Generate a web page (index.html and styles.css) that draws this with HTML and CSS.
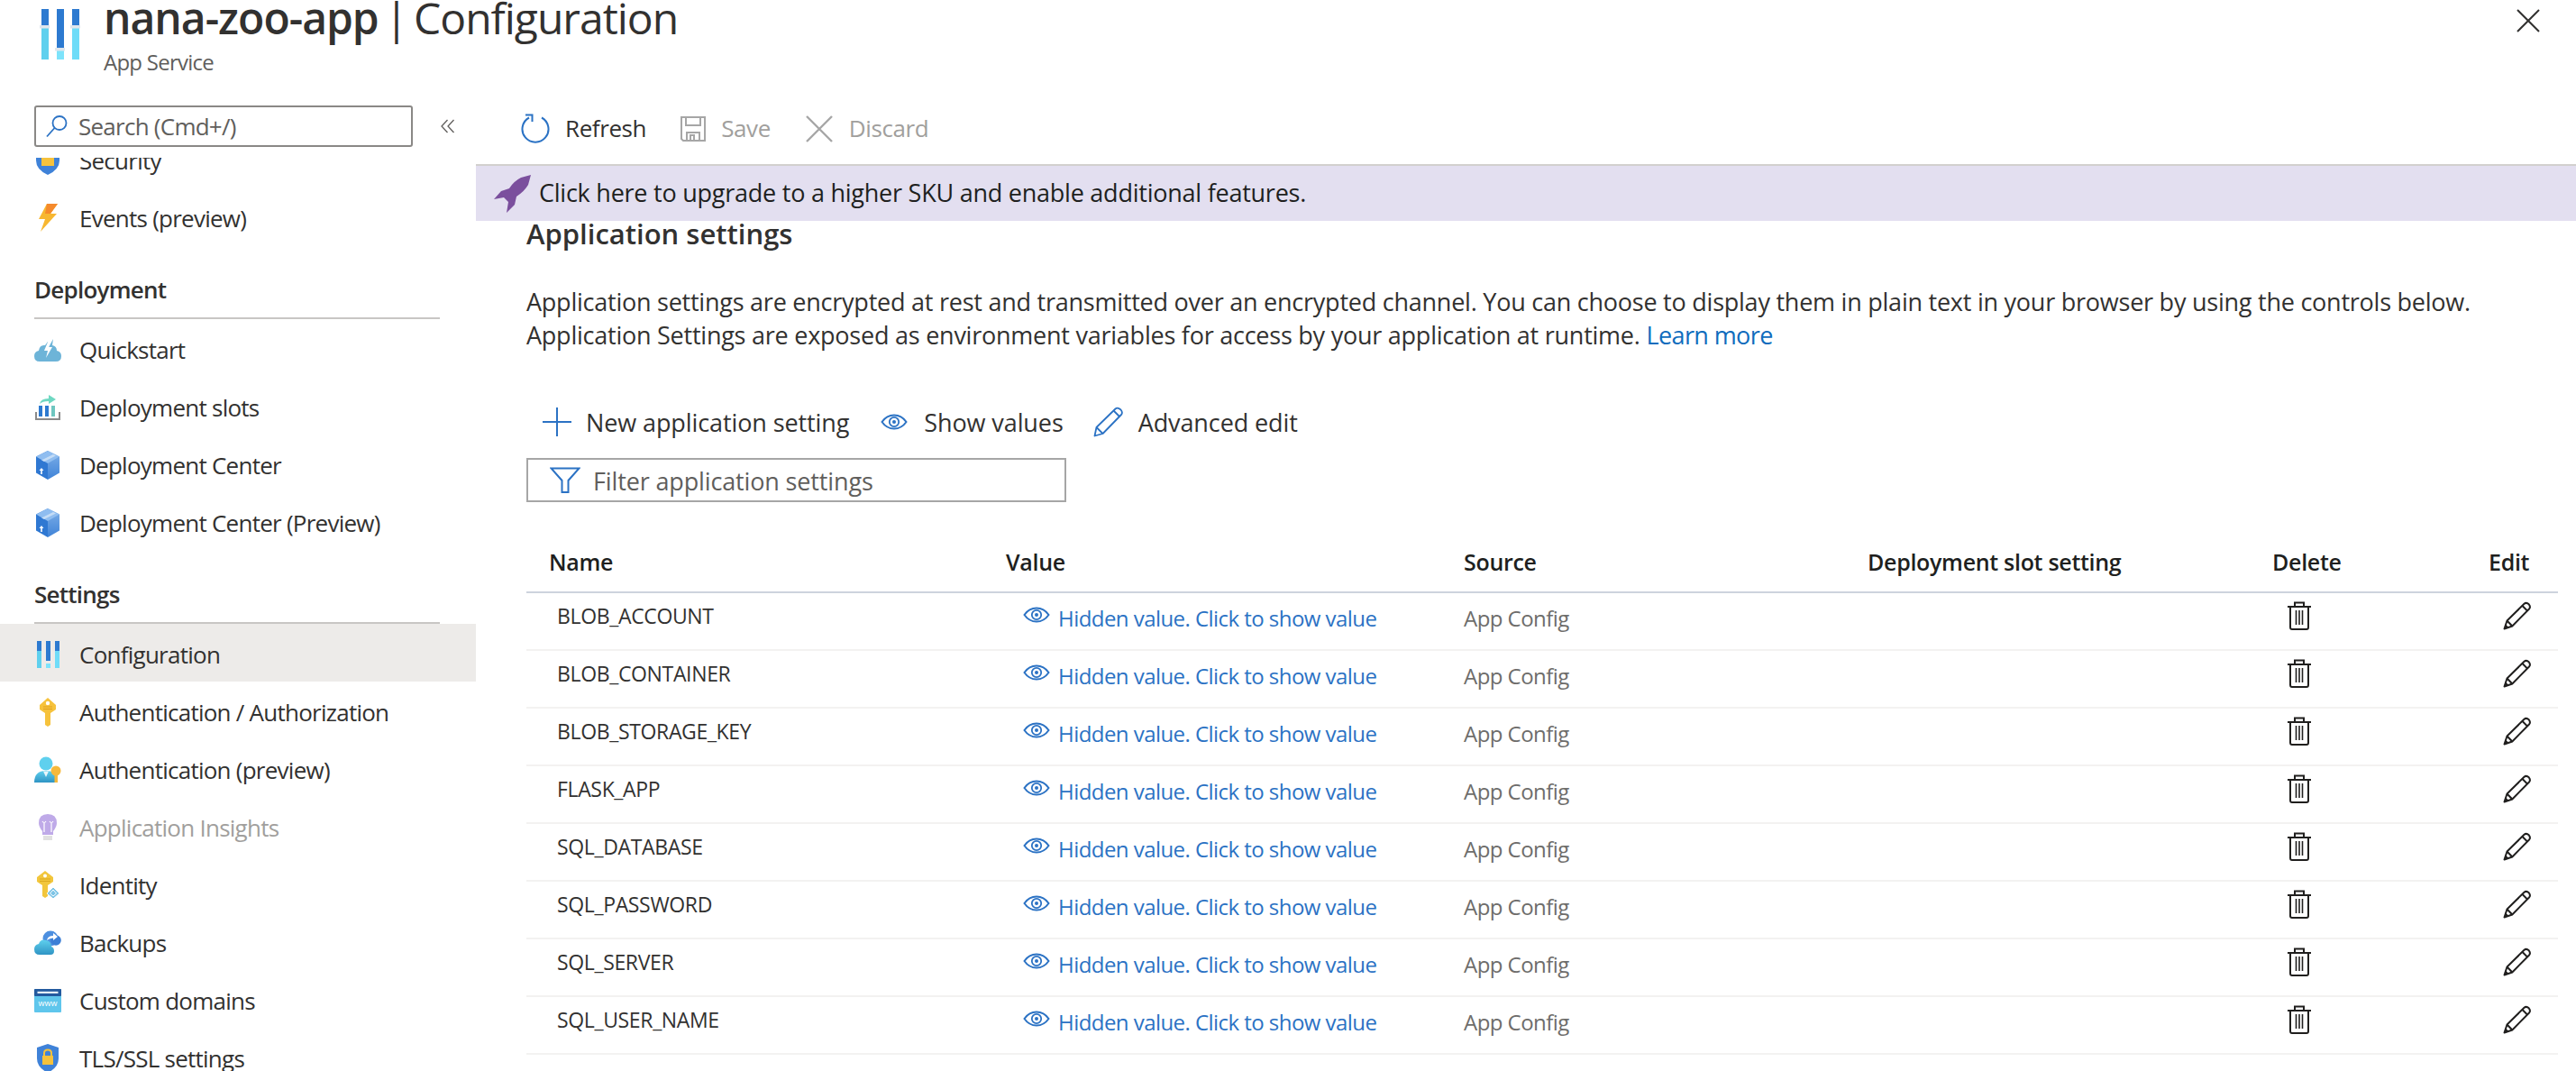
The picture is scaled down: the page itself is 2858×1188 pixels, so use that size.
FILE: index.html
```html
<!DOCTYPE html>
<html>
<head>
  <meta charset="UTF-8">
  <title>nana-zoo-app | Configuration</title>
  <link rel="stylesheet" href="styles.css">
</head>
<body>

<!-- icons that get used more than once -->
<svg class="sprite" xmlns="http://www.w3.org/2000/svg">
  <defs>
    <linearGradient id="boxFill" x1="0" y1="0" x2="0" y2="1">
      <stop offset="0" stop-color="#7fb0e8"/><stop offset="1" stop-color="#3f83d8"/>
    </linearGradient>
    <linearGradient id="skyFill" x1="0" y1="0" x2="0" y2="1">
      <stop offset="0" stop-color="#5fd0ee"/><stop offset="1" stop-color="#2f94c4"/>
    </linearGradient>
  </defs>
  <symbol id="i-eye" viewBox="0 0 30 18">
    <path d="M1.500 9C5 4 9.500 1.500 15 1.500S25 4 28.500 9C25 14 20.500 16.500 15 16.500S5 14 1.500 9Z" fill="none" stroke="currentColor" stroke-width="2"/>
    <circle cx="15" cy="9" r="5.200" fill="none" stroke="currentColor" stroke-width="1.800"/>
    <circle cx="15" cy="9" r="2" fill="currentColor"/>
  </symbol>
  <symbol id="i-trash" viewBox="0 0 26 32">
    <path d="M0 6H26M8 6V1.500H18V6M3 6V29Q3 31 5 31H21Q23 31 23 29V6" fill="none" stroke="currentColor" stroke-width="2"/>
    <path d="M9.500 10V26M13 10V26M16.500 10V26" fill="none" stroke="currentColor" stroke-width="1.600"/>
  </symbol>
  <symbol id="i-pencil" viewBox="0 0 32 32">
    <path d="M1.500 30.500L4.500 21.500L23.500 2.800Q26 .8 28.700 3.300Q31 6 29 8.500L10.300 27.500Z" fill="none" stroke="currentColor" stroke-width="2" stroke-linejoin="round"/>
    <path d="M21.500 5L27 10.500M4.500 21.500L10.300 27.500" fill="none" stroke="currentColor" stroke-width="2"/>
    <path d="M1.500 30.500L3 25.500L6.500 29Z" fill="currentColor"/>
  </symbol>
  <symbol id="i-box" viewBox="0 0 30 32">
    <path d="M15 0L28 6.500V24.500L15 32Z" fill="url(#boxFill)"/>
    <path d="M15 0L2 6.500V24.500L15 32V14Z" fill="#2f78d2"/>
    <path d="M2 6.500L15 0L28 6.500L15 14Z" fill="#8fbdf0"/>
    <path d="M8 10.500L21 4L24 5.500L11 12Z" fill="#c4dcf6"/>
    <path d="M8 19L5.500 22H7.200V26H8.800V22H10.500Z" fill="#fff"/>
  </symbol>
</svg>

<header class="blade-head">
  <svg class="blade-logo" viewBox="0 0 46 58" width="46" height="58">
    <rect x="2" y="1" width="8" height="20" fill="#2d7ad0"/>
    <rect x="2" y="21" width="8" height="36" fill="#5fd0ee"/>
    <rect x="19" y="1" width="8" height="45" fill="#2d7ad0"/>
    <rect x="19" y="46" width="8" height="11" fill="#7de3fb"/>
    <rect x="36" y="1" width="8" height="20" fill="#2d7ad0"/>
    <rect x="36" y="21" width="8" height="36" fill="#6fdcf8"/>
    <rect x="0" y="19" width="11" height="3.500" fill="#dfe6ec"/>
    <rect x="17" y="44" width="11" height="3.500" fill="#dfe6ec"/>
    <rect x="34" y="19" width="11" height="3.500" fill="#dfe6ec"/>
  </svg>
  <div class="blade-title">
    <h1><b>nana-zoo-app</b> | Configuration</h1>
    <p>App Service</p>
  </div>
  <svg class="blade-close" viewBox="0 0 26 26" width="26" height="26">
    <path d="M1 1L25 25M25 1L1 25" stroke="#323130" stroke-width="2"/>
  </svg>
</header>

<div class="layout">
  <aside class="sidebar">
    <div class="search-row">
      <div class="search-box">
        <svg viewBox="0 0 24 26" width="24" height="26">
          <circle cx="15" cy="9.500" r="7.500" fill="none" stroke="#2b72c4" stroke-width="1.800"/>
          <path d="M9.500 15L1 24.500" stroke="#2b72c4" stroke-width="1.800"/>
        </svg>
        <span>Search (Cmd+/)</span>
      </div>
      <svg class="collapse" viewBox="0 0 16 16" width="16" height="16">
        <path d="M7.500 1L1 8L7.500 15M14.500 1L8 8L14.500 15" fill="none" stroke="#605e5c" stroke-width="1.300"/>
      </svg>
    </div>

    <nav class="nav-clip">
      <div class="nav">
        <a class="nav-item">
          <svg viewBox="0 0 30 32" width="30" height="32">
            <path d="M2 4L15 0L28 4V16Q28 26 15 32Q2 26 2 16Z" fill="#3f82d8"/>
            <rect x="8" y="12" width="14" height="10" fill="#f6c23c"/>
          </svg>
          Security
        </a>
        <a class="nav-item">
          <svg viewBox="0 0 30 32" width="30" height="32">
            <path d="M14 0H26L18 11H25L7 31L12 17H5Z" fill="#f7b731"/>
            <path d="M14 0H26L18 11H12Z" fill="#f58a2c"/>
          </svg>
          Events (preview)
        </a>

        <h2 class="nav-head">Deployment</h2>
        <a class="nav-item">
          <svg viewBox="0 0 30 30" width="30" height="30">
            <path d="M6 28Q0 28 0 22Q0 17 5 16Q6 9 12 10L15 6L16 12L21 3L20 10Q25 11 25 16Q30 17 30 22Q30 28 24 28Z" fill="#6db4d8"/>
            <path d="M16 4L11 16H15L13 24L20 12H16L19 4Z" fill="#fff"/>
          </svg>
          Quickstart
        </a>
        <a class="nav-item">
          <svg viewBox="0 0 30 30" width="30" height="30">
            <path d="M2 20V28H28V20" fill="none" stroke="#8a8a8a" stroke-width="2"/>
            <rect x="5" y="13" width="4" height="12" fill="#2d7ad0"/>
            <rect x="12" y="13" width="4" height="12" fill="#2d7ad0"/>
            <rect x="19" y="13" width="4" height="12" fill="#6fc6c0"/>
            <path d="M6 11Q7 5 16 5V1L24 6L16 11V8Q9 8 6 11Z" fill="#6fd8c2"/>
          </svg>
          Deployment slots
        </a>
        <a class="nav-item"><svg width="30" height="32"><use href="#i-box"/></svg>Deployment Center</a>
        <a class="nav-item"><svg width="30" height="32"><use href="#i-box"/></svg>Deployment Center (Preview)</a>

        <h2 class="nav-head">Settings</h2>
        <a class="nav-item selected">
          <svg viewBox="0 0 30 30" width="30" height="30">
            <rect x="3" y="0" width="5" height="11" fill="#2d7ad0"/><rect x="3" y="11" width="5" height="19" fill="#5fd0ee"/>
            <rect x="13" y="0" width="5" height="22" fill="#2d7ad0"/><rect x="13" y="25" width="5" height="5" fill="#7de3fb"/>
            <rect x="23" y="0" width="5" height="11" fill="#2d7ad0"/><rect x="23" y="11" width="5" height="19" fill="#6fdcf8"/>
          </svg>
          Configuration
        </a>
        <a class="nav-item">
          <svg viewBox="0 0 30 32" width="30" height="32">
            <path d="M15 0L24 8V13L18 17V30L15 32L12 30V17L6 13V8Z" fill="#f6c23c"/>
            <circle cx="15" cy="6" r="2.200" fill="#fff"/>
            <path d="M10 10H20M10 12.500H20" stroke="#e0a020" stroke-width="1"/>
          </svg>
          Authentication / Authorization
        </a>
        <a class="nav-item">
          <svg viewBox="0 0 30 30" width="30" height="30">
            <circle cx="13" cy="8" r="7.500" fill="#5fd0ee"/>
            <path d="M0 29Q0 16 13 16Q26 16 26 29Z" fill="url(#skyFill)"/>
            <path d="M10 16.500H16L13 23Z" fill="#e8f6fb"/>
            <circle cx="24" cy="16" r="5.500" fill="#f6b93c"/>
            <rect x="22.500" y="18" width="3.500" height="11" fill="#f6b93c"/>
          </svg>
          Authentication (preview)
        </a>
        <a class="nav-item muted">
          <svg viewBox="0 0 30 30" width="30" height="30">
            <path d="M15 0Q25 0 25 10Q25 14 21 19V23H9V19Q5 14 5 10Q5 0 15 0Z" fill="#bfaae8"/>
            <path d="M11 9V20M19 9V20M9 8Q11 11 13 8M17 8Q19 11 21 8" fill="none" stroke="#fff" stroke-width="1.200"/>
            <rect x="10" y="24" width="10" height="5" fill="#e1e1e1"/>
          </svg>
          Application Insights
        </a>
        <a class="nav-item">
          <svg viewBox="0 0 30 32" width="30" height="32">
            <path d="M12 0L21 7V12L15 16V28L12 30L9 28V16L3 12V7Z" fill="#f2c63c"/>
            <circle cx="12" cy="5.500" r="2" fill="#fff"/>
            <path d="M6 9H18M6 11.500H18" stroke="#dca91f" stroke-width="1"/>
            <path d="M21 18L28 25L21 31L14 25Z" fill="#7cc4e6" stroke="#fff" stroke-width="1"/>
            <path d="M21 21L24.500 25L21 28L17.500 25Z" fill="none" stroke="#fff" stroke-width="1"/>
          </svg>
          Identity
        </a>
        <a class="nav-item">
          <svg viewBox="0 0 30 28" width="30" height="28">
            <circle cx="18" cy="9" r="8.500" fill="#4d8fdf"/>
            <circle cx="24" cy="11" r="5.800" fill="#3c7fd6"/>
            <path d="M6 27Q0 27 0 21Q0 16 5 15Q7 9 13 11Q19 12 19 18Q22 19 22 23Q22 27 18 27Z" fill="url(#skyFill)"/>
            <path d="M14 11Q15 6 21 6V3L26 7L21 11V8.500Q17 8.500 14 11Z" fill="#fff"/>
          </svg>
          Backups
        </a>
        <a class="nav-item">
          <svg viewBox="0 0 30 26" width="30" height="26">
            <rect x="0" y="0" width="30" height="26" rx="1" fill="#5fc6ec"/>
            <rect x="0" y="0" width="30" height="8" rx="1" fill="#235a9e"/>
            <rect x="3.500" y="2.800" width="23" height="2.200" fill="#e4eef8"/>
            <text x="15" y="18.500" class="www">www</text>
          </svg>
          Custom domains
        </a>
        <a class="nav-item">
          <svg viewBox="0 0 30 32" width="30" height="32">
            <path d="M3 4L15 0L27 4V16Q27 26 15 32Q3 26 3 16Z" fill="#3f82d8"/>
            <rect x="9" y="13" width="12" height="10" fill="#f6c23c"/>
            <path d="M11 13V10Q11 6.500 15 6.500Q19 6.500 19 10V13" fill="none" stroke="#f6c23c" stroke-width="2"/>
          </svg>
          TLS/SSL settings
        </a>
      </div>
    </nav>
  </aside>

  <main class="content">
    <div class="toolbar">
      <a class="tool">
        <svg viewBox="0 0 32 34" width="32" height="34">
          <path d="M9 4.500A14.500 14.500 0 1 0 23 4.500" fill="none" stroke="#2b72c4" stroke-width="2"/>
          <path d="M5 1.500H12.500V9" fill="none" stroke="#2b72c4" stroke-width="2"/>
        </svg>
        <span>Refresh</span>
      </a>
      <a class="tool disabled">
        <svg viewBox="0 0 28 28" width="28" height="28">
          <path d="M1 1H27V27H3L1 25Z" fill="none" stroke="#a6a6a6" stroke-width="2"/>
          <path d="M6 1V10H22V1M7 27V18H21V27M11 27V21H15V27" fill="none" stroke="#a6a6a6" stroke-width="2"/>
        </svg>
        <span>Save</span>
      </a>
      <a class="tool disabled">
        <svg viewBox="0 0 32 32" width="32" height="32">
          <path d="M2 2L30 30M30 2L2 30" stroke="#a6a6a6" stroke-width="2.400"/>
        </svg>
        <span>Discard</span>
      </a>
    </div>

    <div class="banner">
      <svg viewBox="0 0 42 42" width="42" height="42">
        <path d="M41 0L30 3Q22 7 17 15L8 18L0 27L11 25L16 30L14 42L23 33L25 24Q34 18 38 11Z" fill="#7b4f9d"/>
      </svg>
      <span>Click here to upgrade to a higher SKU and enable additional features.</span>
    </div>

    <section class="settings">
      <h3>Application settings</h3>
      <p class="intro">Application settings are encrypted at rest and transmitted over an encrypted channel. You can choose to display them in plain text in your browser by using the controls below.<br>Application Settings are exposed as environment variables for access by your application at runtime. <a class="link">Learn more</a></p>

      <div class="commands">
        <a class="command">
          <svg viewBox="0 0 32 32" width="32" height="32"><path d="M16 0V32M0 16H32" stroke="#2b72c4" stroke-width="2"/></svg>
          New application setting
        </a>
        <a class="command eye">
          <svg width="30" height="18"><use href="#i-eye"/></svg>
          Show values
        </a>
        <a class="command pen">
          <svg viewBox="0 0 34 34" width="34" height="34">
            <path d="M1.500 32.500L3.500 23L24.500 2.500Q27 .5 30.500 3.500Q33 6.500 31 9L10.500 30Z" fill="none" stroke="#2b72c4" stroke-width="1.800" stroke-linejoin="round"/>
            <path d="M22.500 4.500L29 11M3.500 23L10.500 30" fill="none" stroke="#2b72c4" stroke-width="1.800"/>
          </svg>
          Advanced edit
        </a>
      </div>

      <div class="filter">
        <svg viewBox="0 0 34 30" width="34" height="30">
          <path d="M1.500 1.500H32.500L20.500 15V28H13.500V15Z" fill="none" stroke="#2b72c4" stroke-width="2"/>
        </svg>
        <span>Filter application settings</span>
      </div>

      <div class="table">
        <div class="row head">
          <div class="cell">Name</div>
          <div class="cell">Value</div>
          <div class="cell">Source</div>
          <div class="cell">Deployment slot setting</div>
          <div class="cell">Delete</div>
          <div class="cell">Edit</div>
        </div>

        <div class="row">
          <div class="cell name">BLOB_ACCOUNT</div>
          <div class="cell value"><svg width="30" height="18"><use href="#i-eye"/></svg><a>Hidden value. Click to show value</a></div>
          <div class="cell source">App Config</div>
          <div class="cell"></div>
          <div class="cell del"><svg width="26" height="32"><use href="#i-trash"/></svg></div>
          <div class="cell edit"><svg width="32" height="32"><use href="#i-pencil"/></svg></div>
        </div>
        <div class="row">
          <div class="cell name">BLOB_CONTAINER</div>
          <div class="cell value"><svg width="30" height="18"><use href="#i-eye"/></svg><a>Hidden value. Click to show value</a></div>
          <div class="cell source">App Config</div>
          <div class="cell"></div>
          <div class="cell del"><svg width="26" height="32"><use href="#i-trash"/></svg></div>
          <div class="cell edit"><svg width="32" height="32"><use href="#i-pencil"/></svg></div>
        </div>
        <div class="row">
          <div class="cell name">BLOB_STORAGE_KEY</div>
          <div class="cell value"><svg width="30" height="18"><use href="#i-eye"/></svg><a>Hidden value. Click to show value</a></div>
          <div class="cell source">App Config</div>
          <div class="cell"></div>
          <div class="cell del"><svg width="26" height="32"><use href="#i-trash"/></svg></div>
          <div class="cell edit"><svg width="32" height="32"><use href="#i-pencil"/></svg></div>
        </div>
        <div class="row">
          <div class="cell name">FLASK_APP</div>
          <div class="cell value"><svg width="30" height="18"><use href="#i-eye"/></svg><a>Hidden value. Click to show value</a></div>
          <div class="cell source">App Config</div>
          <div class="cell"></div>
          <div class="cell del"><svg width="26" height="32"><use href="#i-trash"/></svg></div>
          <div class="cell edit"><svg width="32" height="32"><use href="#i-pencil"/></svg></div>
        </div>
        <div class="row">
          <div class="cell name">SQL_DATABASE</div>
          <div class="cell value"><svg width="30" height="18"><use href="#i-eye"/></svg><a>Hidden value. Click to show value</a></div>
          <div class="cell source">App Config</div>
          <div class="cell"></div>
          <div class="cell del"><svg width="26" height="32"><use href="#i-trash"/></svg></div>
          <div class="cell edit"><svg width="32" height="32"><use href="#i-pencil"/></svg></div>
        </div>
        <div class="row">
          <div class="cell name">SQL_PASSWORD</div>
          <div class="cell value"><svg width="30" height="18"><use href="#i-eye"/></svg><a>Hidden value. Click to show value</a></div>
          <div class="cell source">App Config</div>
          <div class="cell"></div>
          <div class="cell del"><svg width="26" height="32"><use href="#i-trash"/></svg></div>
          <div class="cell edit"><svg width="32" height="32"><use href="#i-pencil"/></svg></div>
        </div>
        <div class="row">
          <div class="cell name">SQL_SERVER</div>
          <div class="cell value"><svg width="30" height="18"><use href="#i-eye"/></svg><a>Hidden value. Click to show value</a></div>
          <div class="cell source">App Config</div>
          <div class="cell"></div>
          <div class="cell del"><svg width="26" height="32"><use href="#i-trash"/></svg></div>
          <div class="cell edit"><svg width="32" height="32"><use href="#i-pencil"/></svg></div>
        </div>
        <div class="row">
          <div class="cell name">SQL_USER_NAME</div>
          <div class="cell value"><svg width="30" height="18"><use href="#i-eye"/></svg><a>Hidden value. Click to show value</a></div>
          <div class="cell source">App Config</div>
          <div class="cell"></div>
          <div class="cell del"><svg width="26" height="32"><use href="#i-trash"/></svg></div>
          <div class="cell edit"><svg width="32" height="32"><use href="#i-pencil"/></svg></div>
        </div>
      </div>
    </section>
  </main>
</div>

</body>
</html>
```

FILE: styles.css
```css
* {
  margin: 0;
  padding: 0;
  box-sizing: border-box;
}

html, body {
  height: 100%;
}

body {
  background-color: #fff;
  color: #323130;
  font-family: "Open Sans", "Noto Sans", sans-serif;
  font-size: 26px;
  letter-spacing: -0.75px;
  overflow: hidden;
}

svg {
  flex: none;
}

.sprite {
  position: absolute;
  width: 0;
  height: 0;
}

/* header */
.blade-head {
  display: flex;
  height: 104px;
  padding: 0 40px 0 44px;
}

.blade-logo {
  margin-top: 9px;
}

.blade-title {
  margin-left: 25px;
  flex: 1;
}

.blade-title h1 {
  font-size: 48px;
  font-weight: 400;
  line-height: 40px;
  letter-spacing: -1px;
  word-spacing: -4.500px;
}

.blade-title p {
  font-size: 24px;
  line-height: 32px;
  margin-top: 13px;
  color: #605e5c;
}

.blade-title b {
  font-weight: 600;
}

.blade-close {
  margin-top: 10px;
}

.layout {
  display: flex;
  height: 1084px;
}

/* left menu */
.sidebar {
  width: 528px;
  display: flex;
  flex-direction: column;
  flex: none;
}

.search-row {
  display: flex;
  align-items: center;
  gap: 31px;
  padding: 13px 0 12px 38px;
}

.search-box {
  display: flex;
  align-items: center;
  gap: 12px;
  width: 420px;
  height: 46px;
  padding-left: 11px;
  border: 2px solid #8a8886;
  border-radius: 3px;
  color: #605e5c;
}

.nav-clip {
  flex: 1;
  overflow: hidden;
}

.nav {
  margin-top: -31px;
}

.nav-item {
  display: flex;
  align-items: center;
  gap: 20px;
  height: 64px;
  padding: 4px 0 0 38px;
}

.nav-item svg {
  width: 30px;
}

.nav-item.selected {
  background-color: #edebe9;
}

.nav-item.muted {
  color: #a19f9d;
}

.nav-head {
  display: flex;
  align-items: flex-end;
  height: 82px;
  margin: 0 40px 0 38px;
  padding-bottom: 13px;
  border-bottom: 2px solid #c8c6c4;
  font-size: 26px;
  font-weight: 600;
}

/* main area */
.content {
  flex: 1;
  min-width: 0;
  font-size: 27px;
  letter-spacing: -0.24px;
}

.toolbar {
  display: flex;
  align-items: center;
  height: 78px;
  padding-left: 50px;
  gap: 38px;
  font-size: 26px;
  letter-spacing: -0.4px;
}

.tool {
  display: flex;
  align-items: center;
  gap: 17px;
}

.tool span {
  margin-top: -3px;
}

.tool.disabled {
  color: #a19f9d;
}

.banner {
  display: flex;
  align-items: center;
  gap: 8px;
  height: 63px;
  padding-left: 20px;
  border-top: 2px solid #d2d0ce;
  background-color: #e3dff0;
  color: #201f1e;
}

.banner span {
  margin-top: -3px;
}

.settings {
  padding: 0 20px 0 56px;
}

.settings h3 {
  font-size: 31px;
  font-weight: 600;
  line-height: 34px;
  margin-top: -3px;
  letter-spacing: 0;
}

.intro {
  margin-top: 40px;
  line-height: 37px;
  white-space: nowrap;
}

.link {
  color: #0f6cbd;
  letter-spacing: -0.6px;
}

.commands {
  display: flex;
  align-items: center;
  height: 50px;
  margin-top: 53px;
  padding-left: 18px;
  letter-spacing: -0.1px;
}

.command {
  display: flex;
  align-items: center;
  gap: 16px;
}

.command svg {
  color: #2b72c4;
}

.command.eye {
  margin-left: 35px;
  gap: 18px;
}

.command.pen {
  margin-left: 33px;
}

.filter {
  display: flex;
  align-items: center;
  gap: 14px;
  width: 599px;
  height: 49px;
  margin-top: 15px;
  padding-left: 24px;
  border: 2px solid #a6a6a6;
  color: #605e5c;
  letter-spacing: -0.14px;
}

.filter span {
  margin-top: 2px;
}

/* settings table */
.table {
  margin-top: 33px;
}

.row {
  display: grid;
  grid-template-columns: 507px 508px 448px 449px 240px 1fr;
  align-items: center;
  height: 64px;
  padding-left: 25px;
  border-bottom: 2px solid #f3f2f1;
  font-size: 24px;
  letter-spacing: -0.55px;
}

.row.head {
  height: 68px;
  border-bottom-color: #cdd3dd;
  font-size: 25px;
  font-weight: 600;
  letter-spacing: -0.3px;
  color: #201f1e;
}

.cell {
  display: flex;
  align-items: center;
  white-space: nowrap;
}

.cell.name {
  padding-left: 9px;
  margin-top: -13px;
  font-size: 23px;
  letter-spacing: -0.35px;
}

.cell.value {
  gap: 9px;
  padding-left: 19px;
  margin-top: -7px;
  color: #2b72c4;
}

.cell.value svg {
  margin-top: -8px;
}

.cell.source {
  margin-top: -7px;
  color: #6e6d6b;
}

.cell.del {
  padding-left: 17px;
  color: #201f1e;
  margin-top: -12px;
}

.cell.edit {
  padding-left: 16px;
  color: #201f1e;
  margin-top: -12px;
}

.www {
  font-size: 9px;
  letter-spacing: 0;
  fill: #fff;
  text-anchor: middle;
}
```
